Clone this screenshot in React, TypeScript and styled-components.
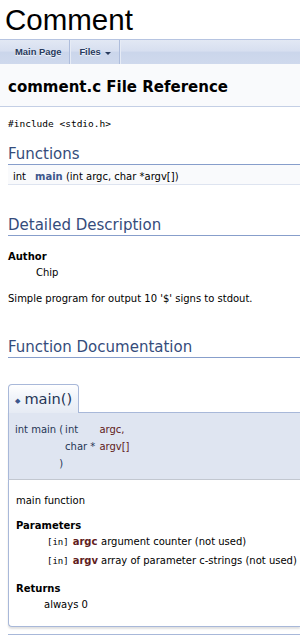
import React from "react";
import styled, { createGlobalStyle } from "styled-components";

const GlobalStyle = createGlobalStyle`
  html, body {
    margin: 0;
    padding: 0;
    background: #ffffff;
    overflow-x: hidden;
  }
  body {
    font-family: "DejaVu Sans", sans-serif;
    font-size: 10px;
    line-height: 12px;
    color: #000000;
  }
`;

const Page = styled.div`
  width: 100%;
`;

const TitleArea = styled.div`
  padding: 3px 5px;
  font-family: "Liberation Sans", Arial, sans-serif;
  font-size: 29.5px;
  line-height: 33px;
  color: #000;
`;

const NavBar = styled.div`
  display: flex;
  height: 24px;
  border-top: 1px solid #b6c4e1;
  background: linear-gradient(
    to bottom,
    #e2e8f4 0%,
    #d7dff0 45%,
    #cbd6eb 52%,
    #cfd9ed 100%
  );
`;

const NavItem = styled.div<{ $first?: boolean }>`
  display: flex;
  align-items: center;
  padding: 0 8px 0 ${(p) => (p.$first ? "15px" : "9px")};
  font-family: "Liberation Sans", Arial, sans-serif;
  font-weight: bold;
  font-size: 9.4px;
  color: #283a5d;
  text-shadow: 0 1px 1px rgba(255, 255, 255, 0.9);
  border-right: 1px solid #aebddc;
  box-shadow: 1px 0 0 #e6ebf5;
`;

const Caret = styled.span`
  display: inline-block;
  margin-left: 4px;
  margin-top: 2px;
  border-left: 3px solid transparent;
  border-right: 3px solid transparent;
  border-top: 3px solid #283a5d;
`;

const Header = styled.div`
  background: #f9fafc;
  border-bottom: 1px solid #c4cfe5;
  padding: 14px 8px 10px;
`;

const Title = styled.div`
  font-weight: bold;
  font-size: 15px;
  line-height: 18px;
`;

const Contents = styled.div`
  padding: 0 0 0 8px;
`;

const Include = styled.div`
  margin-top: 11px;
  font-family: "DejaVu Sans Mono", monospace;
  font-size: 9.5px;
  line-height: 12px;
`;

const GroupHeader = styled.h2<{ $top: number }>`
  margin: ${(p) => p.$top}px 0 0;
  font-size: 15px;
  line-height: 19px;
  font-weight: normal;
  color: #354c7b;
  border-bottom: 1px solid #879ecb;
`;

const MemberRow = styled.div`
  display: flex;
  align-items: baseline;
  padding: 6px 0 1px 5px;
  line-height: 12px;
  background: #f9fafc;
  border-bottom: 1px solid #dee4f0;
`;

const MemberType = styled.span`
  width: 22px;
`;

const MemberLink = styled.span`
  font-weight: bold;
  color: #3d578c;
`;

const Section = styled.dl<{ $top?: number }>`
  margin: ${(p) => p.$top ?? 14}px 0 0;
`;

const Term = styled.dt`
  font-weight: bold;
  line-height: 12px;
`;

const Def = styled.dd<{ $gap?: number }>`
  margin: ${(p) => p.$gap ?? 4}px 0 0 28px;
  line-height: 12px;
`;

const Para = styled.p<{ $top: number }>`
  margin: ${(p) => p.$top}px 0 0;
  line-height: 12px;
`;

const MemItem = styled.div`
  margin-top: 26px;
  display: flex;
  flex-direction: column;
  align-items: flex-start;
`;

const MemTitle = styled.div`
  display: flex;
  align-items: center;
  gap: 4px;
  height: 28px;
  padding: 0 6px;
  margin-bottom: -1px;
  position: relative;
  z-index: 1;
  border: 1px solid #a8b8d9;
  border-bottom: none;
  border-radius: 4px 4px 0 0;
  background: linear-gradient(to bottom, #ffffff 0%, #f2f5fa 40%, #e6ebf4 100%);
  font-size: 14.6px;
  color: #253555;
`;

const Diamond = styled.span`
  font-size: 7px;
  color: #3d578c;
  margin-top: 3px;
`;

const MemProto = styled.div`
  align-self: stretch;
  display: grid;
  grid-template-columns: auto auto auto auto;
  justify-content: start;
  padding: 8px 0 7px 6px;
  border: 1px solid #a8b8d9;
  border-right: none;
  border-bottom: 1px solid #c2c7d0;
  background: #dfe5f1;
  color: #253555;
  line-height: 17px;
  box-shadow: 0 1px 1px rgba(0, 0, 0, 0.12);
`;

const ProtoCell = styled.span<{ $pad?: number; $name?: boolean }>`
  padding-right: ${(p) => p.$pad ?? 0}px;
  color: ${(p) => (p.$name ? "#602020" : "inherit")};
  white-space: nowrap;
`;

const MemDoc = styled.div`
  align-self: stretch;
  padding: 15px 0 15px 7px;
  border: 1px solid #a8b8d9;
  border-top: none;
  border-right: none;
  border-bottom-left-radius: 4px;
  background: #ffffff;
  box-shadow: 0 2px 2px rgba(0, 0, 0, 0.12);
`;

const ParamTable = styled.div`
  display: grid;
  grid-template-columns: auto auto auto;
  justify-content: start;
  margin: 1px 0 0 31px;
  row-gap: 7px;
  padding: 3px 0;
`;

const Dir = styled.span`
  font-family: "DejaVu Sans Mono", monospace;
  font-size: 9px;
  padding-right: 4px;
`;

const ParamName = styled.span`
  font-weight: bold;
  color: #602020;
  padding-right: 3px;
`;

const Footer = styled.hr`
  margin: 7px 0 0;
  border: none;
  border-top: 1px solid #a8b8d9;
`;

const params = [
  { name: "argc", text: "argument counter (not used)" },
  { name: "argv", text: "array of parameter c-strings (not used)" },
];

export default function App() {
  return (
    <Page>
      <GlobalStyle />
      <TitleArea>Comment</TitleArea>
      <NavBar>
        <NavItem $first>Main Page</NavItem>
        <NavItem>
          Files
          <Caret />
        </NavItem>
      </NavBar>
      <Header>
        <Title>comment.c File Reference</Title>
      </Header>
      <Contents>
        <Include>#include &lt;stdio.h&gt;</Include>

        <GroupHeader $top={15}>Functions</GroupHeader>
        <MemberRow>
          <MemberType>int</MemberType>
          <span>
            <MemberLink>main</MemberLink> (int argc, char *argv[])
          </span>
        </MemberRow>

        <GroupHeader $top={31}>Detailed Description</GroupHeader>
        <Section $top={15}>
          <Term>Author</Term>
          <Def>Chip</Def>
        </Section>
        <Para $top={14}>Simple program for output 10 '$' signs to stdout.</Para>

        <GroupHeader $top={33}>Function Documentation</GroupHeader>
        <MemItem>
          <MemTitle>
            <Diamond>◆</Diamond>
            main()
          </MemTitle>
          <MemProto>
            <ProtoCell $pad={3}>int main</ProtoCell>
            <ProtoCell $pad={2}>(</ProtoCell>
            <ProtoCell $pad={4}>int</ProtoCell>
            <ProtoCell $name>argc,</ProtoCell>
            <ProtoCell />
            <ProtoCell />
            <ProtoCell $pad={4}>char *</ProtoCell>
            <ProtoCell $name>argv[]</ProtoCell>
            <ProtoCell />
            <ProtoCell>)</ProtoCell>
            <ProtoCell />
            <ProtoCell />
          </MemProto>
          <MemDoc>
            <div>main function</div>
            <Section $top={13}>
              <Term>Parameters</Term>
              <ParamTable>
                {params.map((p) => (
                  <React.Fragment key={p.name}>
                    <Dir>[in]</Dir>
                    <ParamName>{p.name}</ParamName>
                    <span>{p.text}</span>
                  </React.Fragment>
                ))}
              </ParamTable>
            </Section>
            <Section $top={13}>
              <Term>Returns</Term>
              <Def>always 0</Def>
            </Section>
          </MemDoc>
        </MemItem>
        <Footer />
      </Contents>
    </Page>
  );
}
